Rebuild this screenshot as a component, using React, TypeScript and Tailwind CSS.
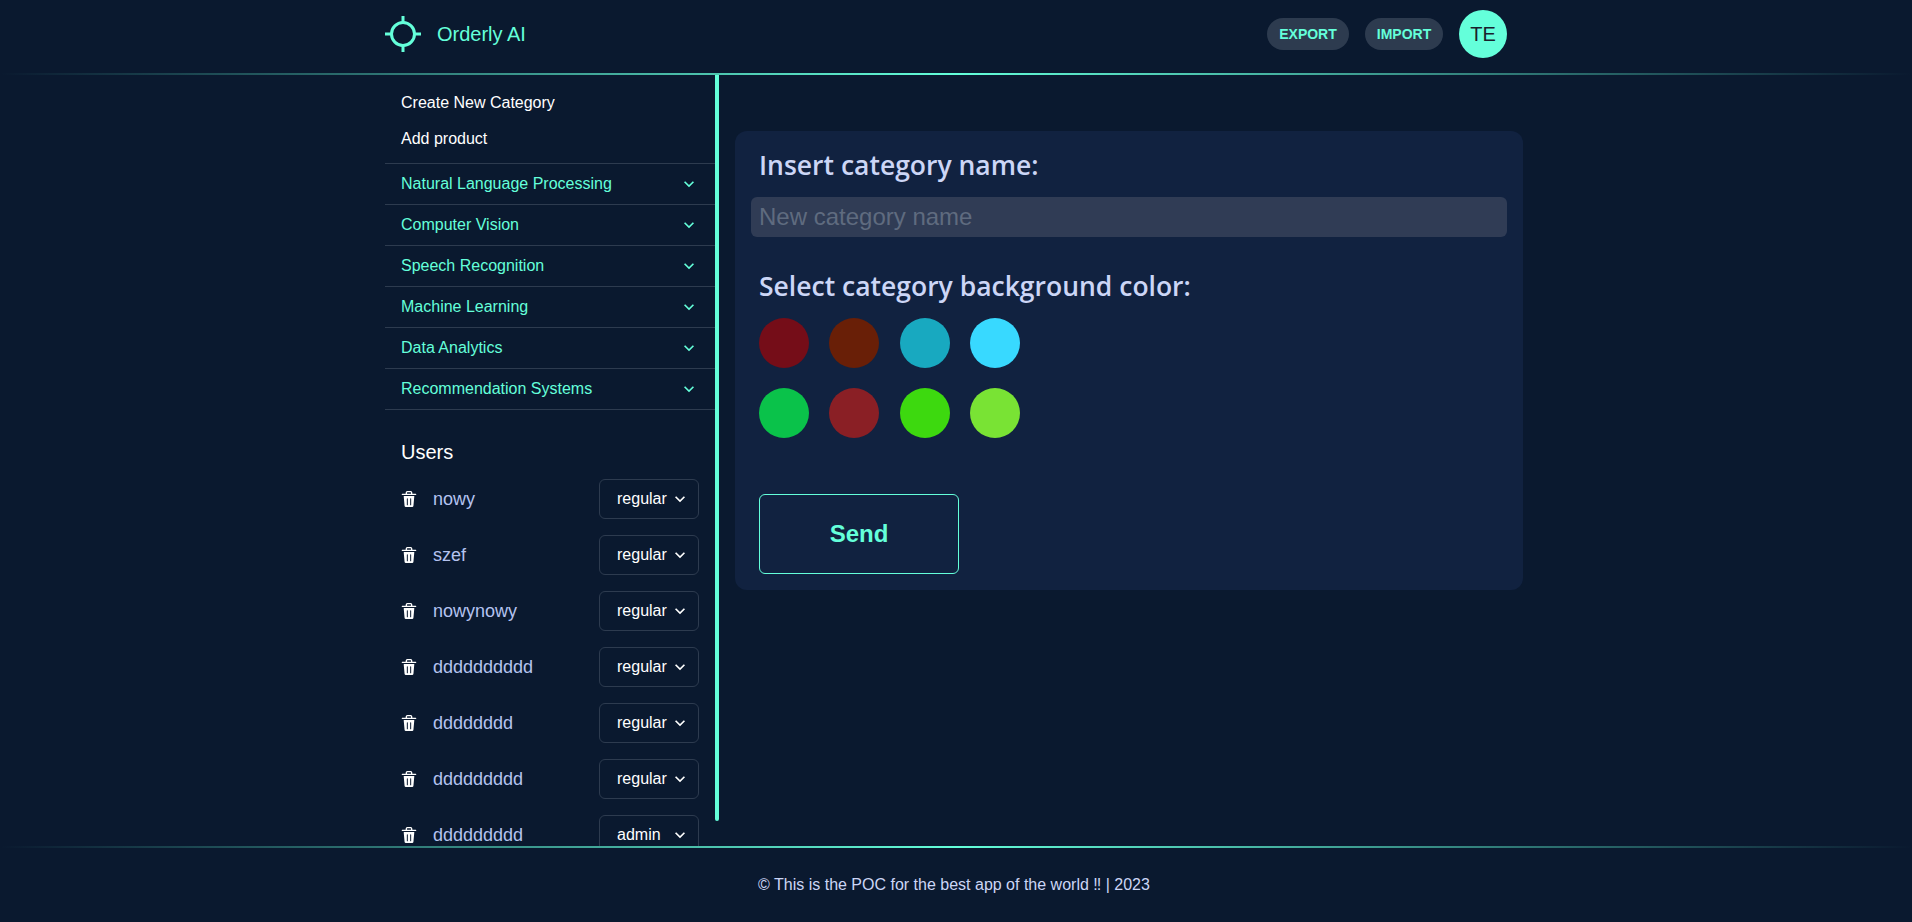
import React from "react";

const categories = ["Natural Language Processing", "Computer Vision", "Speech Recognition", "Machine Learning", "Data Analytics", "Recommendation Systems"];
const users: [string, string][] = [["nowy", "regular"], ["szef", "regular"], ["nowynowy", "regular"], ["dddddddddd", "regular"], ["dddddddd", "regular"], ["ddddddddd", "regular"], ["ddddddddd", "admin"]];
const colors = ["bg-[#750d18]", "bg-[#691f07]", "bg-[#18a9c0]", "bg-[#38d9ff]", "bg-[#0ac24a]", "bg-[#8a1f25]", "bg-[#3dd90f]", "bg-[#79e334]"];

function Chevron({ className }: { className: string }) {
  return (
    <svg viewBox="0 0 24 24" className={className} fill="currentColor">
      <path d="M16.59 8.59L12 13.17 7.41 8.59 6 10l6 6 6-6z" />
    </svg>
  );
}

function Trash() {
  return (
    <svg viewBox="0 0 24 24" className="h-4 w-4 shrink-0 text-white" fill="currentColor">
      <path d="M19.452 7.5H4.547a.5.5 0 00-.5.545l1.287 14.136A2 2 0 007.326 24h9.347a2 2 0 001.992-1.819L19.95 8.045a.5.5 0 00-.129-.382.5.5 0 00-.369-.163zm-9.2 13a.75.75 0 01-1.5 0v-9a.75.75 0 011.5 0zm5 0a.75.75 0 01-1.5 0v-9a.75.75 0 011.5 0zM22 4h-4.75a.25.25 0 01-.25-.25V2.5A2.5 2.5 0 0014.5 0h-5A2.5 2.5 0 007 2.5v1.25a.25.25 0 01-.25.25H2a1 1 0 000 2h20a1 1 0 000-2zM9 3.75V2.5a.5.5 0 01.5-.5h5a.5.5 0 01.5.5v1.25a.25.25 0 01-.25.25h-5.5A.25.25 0 019 3.75z" />
    </svg>
  );
}

function Logo() {
  return (
    <svg viewBox="0 0 36 36" className="h-9 w-9 shrink-0" fill="none" stroke="#64ffda" strokeWidth="3">
      <circle cx="18" cy="18" r="11.5" />
      <path d="M18 0v7M18 29v7M0 18h7M29 18h7" />
    </svg>
  );
}

function Divider() {
  return <div className="h-[2px] shrink-0 bg-gradient-to-r from-transparent via-[#64ffda] to-transparent" />;
}

export default function App() {
  return (
    <div className="flex h-[922px] flex-col overflow-hidden bg-[#0a192f] font-['Liberation_Sans',Arial,sans-serif]">
      <header className="mx-auto flex h-[73px] w-[1142px] shrink-0 items-center justify-between pb-[5px] pr-5">
        <div className="flex items-center gap-4">
          <Logo />
          <span className="text-xl text-[#64ffda]">Orderly AI</span>
        </div>
        <div className="flex items-center gap-4">
          <button className="h-8 w-[82px] rounded-2xl bg-[#2d3b4f] text-sm font-bold text-[#64ffda]">EXPORT</button>
          <button className="h-8 w-[78px] rounded-2xl bg-[#2d3b4f] text-sm font-bold text-[#64ffda]">IMPORT</button>
          <div className="flex h-12 w-12 items-center justify-center rounded-full bg-[#64ffda] text-xl text-[#1a202c]">TE</div>
        </div>
      </header>
      <Divider />
      <main className="mx-auto flex h-[771px] w-[1142px] shrink-0 overflow-hidden">
        <aside className="w-[330px] shrink-0 overflow-hidden">
          <div className="flex h-[89px] flex-col gap-3 border-b border-[#2d3b4f] pl-4 pt-4 text-base text-white">
            <div className="leading-6">Create New Category</div>
            <div className="leading-6">Add product</div>
          </div>
          {categories.map((c) => (
            <div key={c} className="flex h-[41px] items-center justify-between border-b border-[#2d3b4f] px-4 text-base text-[#64ffda]">
              <span>{c}</span>
              <Chevron className="h-5 w-5" />
            </div>
          ))}
          <h2 className="mt-[30px] pl-4 text-xl leading-6 text-white">Users</h2>
          <div className="mt-[15px] flex flex-col gap-4 px-4">
            {users.map(([name, role], i) => (
              <div key={i} className="flex h-10 shrink-0 items-center">
                <Trash />
                <span className="ml-4 flex-1 text-lg text-[#b4c3f0]">{name}</span>
                <div className="flex h-10 w-[100px] items-center justify-between rounded-md border border-[#2d3b4f] pl-[17px] pr-2 text-base text-white">
                  <span>{role}</span>
                  <Chevron className="h-5 w-5" />
                </div>
              </div>
            ))}
          </div>
        </aside>
        <div className="h-[746px] w-1 shrink-0 rounded-b-sm bg-[#64ffda]" />
        <section className="ml-4 mt-[56px] h-[459px] w-[788px] shrink-0 rounded-xl bg-[#112240] px-4 pt-5 text-[#ccd6f6]">
          <h2 className="px-2 font-['Open_Sans',sans-serif] text-[26.5px] font-semibold leading-[28px]">Insert category name:</h2>
          <div className="mt-[18px] flex h-10 items-center rounded-md bg-[#303c55] px-2 text-2xl text-[#5f6b7f]">New category name</div>
          <h2 className="mt-[34px] px-2 font-['Open_Sans',sans-serif] text-[26.5px] font-semibold leading-[30px]">Select category background color:</h2>
          <div className="mt-[17px] grid w-[297px] grid-cols-4 gap-y-5 px-2">
            {colors.map((c) => (
              <div key={c} className={`h-[50px] w-[50px] rounded-full ${c}`} />
            ))}
          </div>
          <button className="ml-2 mt-14 h-20 w-[200px] rounded-md border border-[#64ffda] text-2xl font-bold text-[#64ffda]">Send</button>
        </section>
      </main>
      <Divider />
      <footer className="flex flex-1 items-center justify-center pr-1 text-base text-[#ccd6f6]">© This is the POC for the best app of the world ‼ | 2023</footer>
    </div>
  );
}
